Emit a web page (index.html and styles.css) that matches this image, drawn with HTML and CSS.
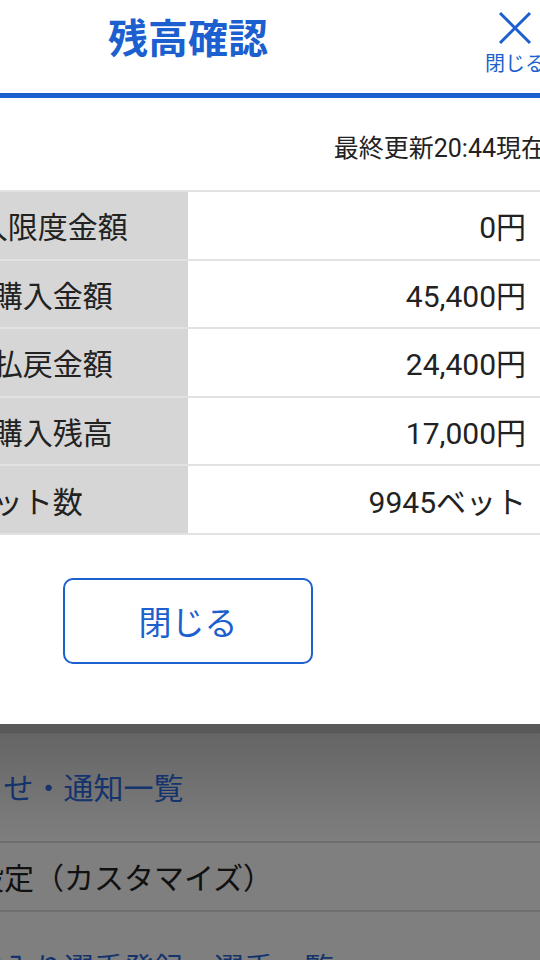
FILE: index.html
```
<!DOCTYPE html>
<html lang="ja">
<head>
    <meta charset="UTF-8">
    <meta name="viewport" content="width=device-width, initial-scale=1.0">
    <title>残高確認</title>
    <link rel="stylesheet" href="styles.css">
</head>
<body>
    <div class="screen">
        <div class="modal">
            <div class="modal-header">
                <h1 class="modal-title">残高確認</h1>
                <button class="close-btn" type="button">
                    <svg width="34" height="34" viewBox="0 0 34 34">
                        <path d="M2 2 L32 32 M32 2 L2 32" stroke="#1c5fcf" stroke-width="3" fill="none"/>
                    </svg>
                    <span>閉じる</span>
                </button>
            </div>

            <p class="updated">最終更新20:44現在</p>

            <table class="balance">
                <tr><th>本日購入限度金額</th><td>0円</td></tr>
                <tr><th>本日の購入金額</th><td>45,400円</td></tr>
                <tr><th>本日の払戻金額</th><td>24,400円</td></tr>
                <tr><th>本日の購入残高</th><td>17,000円</td></tr>
                <tr><th>総ベット数</th><td>9945ベット</td></tr>
            </table>

            <button class="modal-close" type="button">閉じる</button>
        </div>

        <ul class="menu">
            <li class="menu-item tall link">お知らせ・通知一覧</li>
            <li class="menu-item">表示設定（カスタマイズ）</li>
            <li class="menu-item tall link">お気に入り選手登録・選手一覧</li>
        </ul>
    </div>
</body>
</html>
```

FILE: styles.css
```
body {
    margin: 0;
    overflow: hidden;
    font-family: Roboto, "Noto Sans CJK JP", sans-serif;
    color: #222;
    background-color: #fff;
}
.screen {
    width: 720px;
    margin-left: -172px;
}
.modal {
    position: relative;
    z-index: 2;
    background-color: #fff;
    padding-bottom: 60px;
}
.modal-header {
    display: grid;
    grid-template-columns: 1fr auto 1fr;
    height: 93px;
    border-bottom: 5px solid #1c5fcf;
}
.modal-title {
    grid-column: 2;
    margin: 0;
    padding-top: 16px;
    font-size: 40px;
    line-height: 48px;
    font-weight: bold;
    color: #1c5fcf;
}
.close-btn {
    grid-column: 3;
    justify-self: end;
    width: 66px;
    padding: 11px 0 0;
    border: none;
    background: none;
    font-family: inherit;
    font-size: 20px;
    line-height: 22px;
    color: #1c5fcf;
    display: flex;
    flex-direction: column;
    align-items: center;
    gap: 8px;
    white-space: nowrap;
}
.updated {
    margin: 0;
    padding: 36px 2px 26px;
    text-align: right;
    font-size: 25px;
    line-height: 30px;
}
.balance {
    width: 100%;
    border-collapse: collapse;
    font-size: 30px;
}
.balance tr {
    border-top: 2px solid #e2e2e2;
    border-bottom: 2px solid #e2e2e2;
}
.balance th,
.balance td {
    height: 66.6px;
    padding: 0;
}
.balance th {
    width: 50%;
    text-align: center;
    font-weight: normal;
    white-space: nowrap;
    background-color: #d6d6d6;
    border-right: 1px solid #fff;
}
.balance td {
    text-align: right;
    padding-right: 22px;
}
.modal-close {
    display: block;
    width: 250px;
    height: 86px;
    margin: 43px auto 0;
    border: 2px solid #1c5fcf;
    border-radius: 10px;
    background-color: #fff;
    color: #1c5fcf;
    font-family: inherit;
    font-size: 33px;
}
.menu {
    position: relative;
    list-style: none;
    margin: 0;
    padding: 8px 0 0;
    background: linear-gradient(#b3b3b3 0, #b3b3b3 8px, #a8a8a8 8px, #cbcbcb 10px, #fff 120px);
}
.menu::after {
    content: "";
    position: absolute;
    inset: 0;
    background-color: rgba(0, 0, 0, 0.5);
}
.menu-item {
    display: flex;
    align-items: center;
    height: 67px;
    padding-left: 86px;
    border-bottom: 2px solid #dcdcdc;
    font-size: 30px;
    white-space: nowrap;
}
.menu-item.tall {
    height: 109px;
}
.menu-item.link {
    color: #2a66d8;
}
```
